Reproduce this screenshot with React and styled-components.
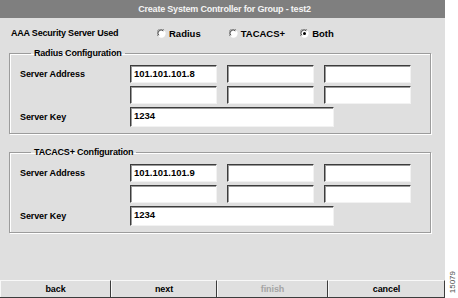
import React from 'react';
import styled, { createGlobalStyle } from 'styled-components';

const GlobalStyle = createGlobalStyle`
  html, body {
    margin: 0;
    padding: 0;
    background: #ffffff;
    overflow: hidden;
  }
  * {
    box-sizing: border-box;
  }
`;

const Screen = styled.div`
  width: 458px;
  height: 298px;
  display: flex;
  font-family: "Liberation Sans", Arial, sans-serif;
  font-weight: bold;
  font-size: 9px;
  color: #000;
`;

const Panel = styled.div`
  width: 445px;
  display: flex;
  flex-direction: column;
  background: #dfdfdf;
`;

const TitleBar = styled.div`
  height: 18px;
  background: #7f7f7f;
  color: #f4f4f4;
  display: flex;
  align-items: center;
  justify-content: center;
  padding-left: 4px;
  letter-spacing: -0.2px;
`;

const Content = styled.div`
  flex: 1;
  display: flex;
  flex-direction: column;
  padding: 0 14px 0 9px;
`;

const ServerRow = styled.div`
  height: 29px;
  display: flex;
  align-items: center;
  padding-left: 2px;
  padding-top: 1px;
  letter-spacing: -0.2px;
`;

const RowLabel = styled.span`
  width: 146px;
`;

const RadioGroup = styled.div`
  display: flex;
  align-items: center;
  font-size: 9.5px;
  letter-spacing: 0;
`;

const RadioOption = styled.label`
  display: flex;
  align-items: center;
  gap: 3px;
  margin-right: ${(p) => p.$space}px;
`;

const Group = styled.fieldset`
  margin: ${(p) => p.$top}px 0 0 0;
  padding: 6px 10px 6px 10px;
  border: 1px solid #9c9c9c;
  box-shadow: inset 1px 1px 0 #ffffff, 1px 1px 0 #ffffff;
  min-width: 0;
`;

const Legend = styled.legend`
  padding: 0 3px;
  margin-left: 11px;
  line-height: 12px;
  letter-spacing: -0.2px;
`;

const FieldGrid = styled.div`
  display: grid;
  grid-template-columns: 100px 87px 87px 87px;
  column-gap: 10px;
  row-gap: 3px;
  align-items: center;
`;

const FieldLabel = styled.span`
  letter-spacing: -0.1px;
`;

const Field = styled.div`
  height: ${(p) => p.$h || 18}px;
  background: #ffffff;
  border-top: 1px solid #3c3c3c;
  border-left: 1px solid #3c3c3c;
  border-right: 1px solid #f2f2f2;
  border-bottom: 1px solid #f2f2f2;
  box-shadow: inset 1px 1px 0 #9a9a9a;
  padding: 2px 0 0 3px;
  line-height: 11px;
  font-size: 9.5px;
  grid-column: ${(p) => p.$span || 'auto'};
`;

const ButtonBar = styled.div`
  height: 18px;
  display: grid;
  grid-template-columns: 111px 106px 111px 1fr;
  border-bottom: 1px solid #3c3c3c;
`;

const BarButton = styled.div`
  display: flex;
  align-items: center;
  justify-content: center;
  border-top: 1px solid #f8f8f8;
  border-left: 1px solid #f8f8f8;
  border-right: 1px solid #3c3c3c;
  color: ${(p) => (p.$disabled ? '#a4a4a4' : '#000')};
  letter-spacing: -0.1px;
`;

const Strip = styled.div`
  flex: 1;
  display: flex;
  flex-direction: column;
  justify-content: flex-end;
  align-items: center;
  padding: 0 0 5px 1px;
`;

const FigureId = styled.span`
  writing-mode: vertical-rl;
  transform: rotate(180deg);
  font-weight: normal;
  font-size: 8px;
  color: #4a4a4a;
`;

function Radio({ checked }) {
  return (
    <svg width="9" height="9" viewBox="0 0 12 12">
      <circle cx="6" cy="6" r="5.5" fill="#ffffff" />
      <path d="M1.5 9.5 A5.5 5.5 0 0 1 9.5 1.5" fill="none" stroke="#7a7a7a" strokeWidth="1.3" />
      <path d="M2.6 8.4 A4 4 0 0 1 8.4 2.6" fill="none" stroke="#2a2a2a" strokeWidth="1.1" />
      {checked && <circle cx="6" cy="6" r="2" fill="#000" />}
    </svg>
  );
}

function ServerConfig({ title, address, serverKey, top }) {
  return (
    <Group $top={top}>
      <Legend>{title}</Legend>
      <FieldGrid>
        <FieldLabel>Server Address</FieldLabel>
        <Field>{address}</Field>
        <Field />
        <Field />
        <span />
        <Field />
        <Field />
        <Field />
        <FieldLabel>Server Key</FieldLabel>
        <Field $h={20} $span="span 2" style={{ width: 204 }}>{serverKey}</Field>
      </FieldGrid>
    </Group>
  );
}

export default function App() {
  return (
    <Screen>
      <GlobalStyle />
      <Panel>
        <TitleBar>Create System Controller for Group - test2</TitleBar>
        <Content>
          <ServerRow>
            <RowLabel>AAA Security Server Used</RowLabel>
            <RadioGroup>
              <RadioOption $space={28}><Radio />Radius</RadioOption>
              <RadioOption $space={15}><Radio />TACACS+</RadioOption>
              <RadioOption $space={0}><Radio checked />Both</RadioOption>
            </RadioGroup>
          </ServerRow>
          <ServerConfig title="Radius Configuration" address="101.101.101.8" serverKey="1234" top={0} />
          <ServerConfig title="TACACS+ Configuration" address="101.101.101.9" serverKey="1234" top={12} />
        </Content>
        <ButtonBar>
          <BarButton>back</BarButton>
          <BarButton>next</BarButton>
          <BarButton $disabled>finish</BarButton>
          <BarButton>cancel</BarButton>
        </ButtonBar>
      </Panel>
      <Strip>
        <FigureId>15079</FigureId>
      </Strip>
    </Screen>
  );
}
